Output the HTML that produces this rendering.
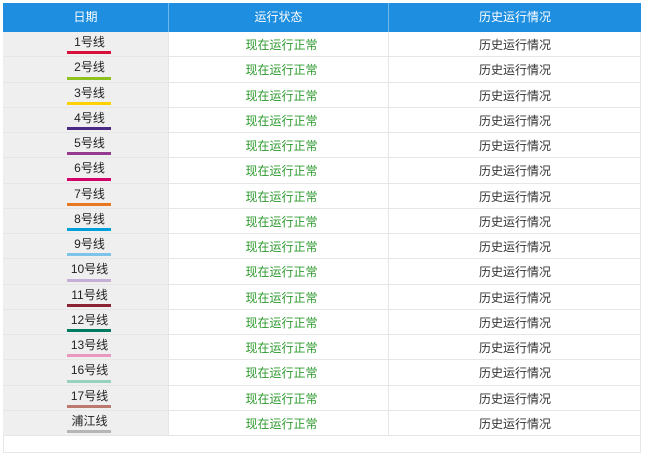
<!DOCTYPE html>
<html><head><meta charset="utf-8"><style>
body{margin:0;background:#fff;width:650px;height:458px;overflow:hidden;font-family:"Liberation Sans","Noto Sans CJK SC",sans-serif;font-size:12px;}
.wrap{position:absolute;left:3px;top:3px;width:638px;height:450px;border:1px solid #e6e6e6;box-sizing:border-box;background:#fff}
.h{position:absolute;left:3px;top:3px;width:638px;height:29px;background:#1e8fe0;color:#fff;display:flex}
.h div{line-height:29px;text-align:center;border-right:1px solid #6fb8ee;box-sizing:border-box}
.r{position:absolute;left:3px;width:638px;height:25.25px;display:flex;box-sizing:border-box;border-bottom:1px solid #e6e6e6;color:#333}
.r div{box-sizing:border-box;text-align:center;border-right:1px solid #e6e6e6;line-height:25px}
.c1{width:166px}.c2{width:220px}.c3{width:252px;border-right:0!important}
.r .n{background:#efefef;position:relative;line-height:17px;padding-top:2px;padding-left:8px;color:#222}
.n i{position:absolute;left:64px;bottom:2px;width:44px;height:3px;display:block}
.r .s{color:#2e9a2e;padding-left:6px;padding-top:1px}
.r .c3{padding-top:1px}
</style></head><body>
<div class="wrap"></div>
<div class="h"><div class="c1">日期</div><div class="c2">运行状态</div><div class="c3" style="border-right:0">历史运行情况</div></div>
<div class="r" style="top:32px"><div class="c1 n">1号线<i style="background:#d6103b"></i></div><div class="c2 s">现在运行正常</div><div class="c3">历史运行情况</div></div>
<div class="r" style="top:57.25px"><div class="c1 n">2号线<i style="background:#8dc21f"></i></div><div class="c2 s">现在运行正常</div><div class="c3">历史运行情况</div></div>
<div class="r" style="top:82.5px"><div class="c1 n">3号线<i style="background:#ffd100"></i></div><div class="c2 s">现在运行正常</div><div class="c3">历史运行情况</div></div>
<div class="r" style="top:107.75px"><div class="c1 n">4号线<i style="background:#4a2a83"></i></div><div class="c2 s">现在运行正常</div><div class="c3">历史运行情况</div></div>
<div class="r" style="top:133px"><div class="c1 n">5号线<i style="background:#953b8f"></i></div><div class="c2 s">现在运行正常</div><div class="c3">历史运行情况</div></div>
<div class="r" style="top:158.25px"><div class="c1 n">6号线<i style="background:#d4006a"></i></div><div class="c2 s">现在运行正常</div><div class="c3">历史运行情况</div></div>
<div class="r" style="top:183.5px"><div class="c1 n">7号线<i style="background:#e87722"></i></div><div class="c2 s">现在运行正常</div><div class="c3">历史运行情况</div></div>
<div class="r" style="top:208.75px"><div class="c1 n">8号线<i style="background:#009edb"></i></div><div class="c2 s">现在运行正常</div><div class="c3">历史运行情况</div></div>
<div class="r" style="top:234px"><div class="c1 n">9号线<i style="background:#7dc4e8"></i></div><div class="c2 s">现在运行正常</div><div class="c3">历史运行情况</div></div>
<div class="r" style="top:259.25px"><div class="c1 n">10号线<i style="background:#c6afd4"></i></div><div class="c2 s">现在运行正常</div><div class="c3">历史运行情况</div></div>
<div class="r" style="top:284.5px"><div class="c1 n">11号线<i style="background:#8b2332"></i></div><div class="c2 s">现在运行正常</div><div class="c3">历史运行情况</div></div>
<div class="r" style="top:309.75px"><div class="c1 n">12号线<i style="background:#007b5f"></i></div><div class="c2 s">现在运行正常</div><div class="c3">历史运行情况</div></div>
<div class="r" style="top:335px"><div class="c1 n">13号线<i style="background:#e999c0"></i></div><div class="c2 s">现在运行正常</div><div class="c3">历史运行情况</div></div>
<div class="r" style="top:360.25px"><div class="c1 n">16号线<i style="background:#98d1c0"></i></div><div class="c2 s">现在运行正常</div><div class="c3">历史运行情况</div></div>
<div class="r" style="top:385.5px"><div class="c1 n">17号线<i style="background:#bc796f"></i></div><div class="c2 s">现在运行正常</div><div class="c3">历史运行情况</div></div>
<div class="r" style="top:410.75px"><div class="c1 n">浦江线<i style="background:#b5b5b5"></i></div><div class="c2 s">现在运行正常</div><div class="c3">历史运行情况</div></div>
</body></html>
